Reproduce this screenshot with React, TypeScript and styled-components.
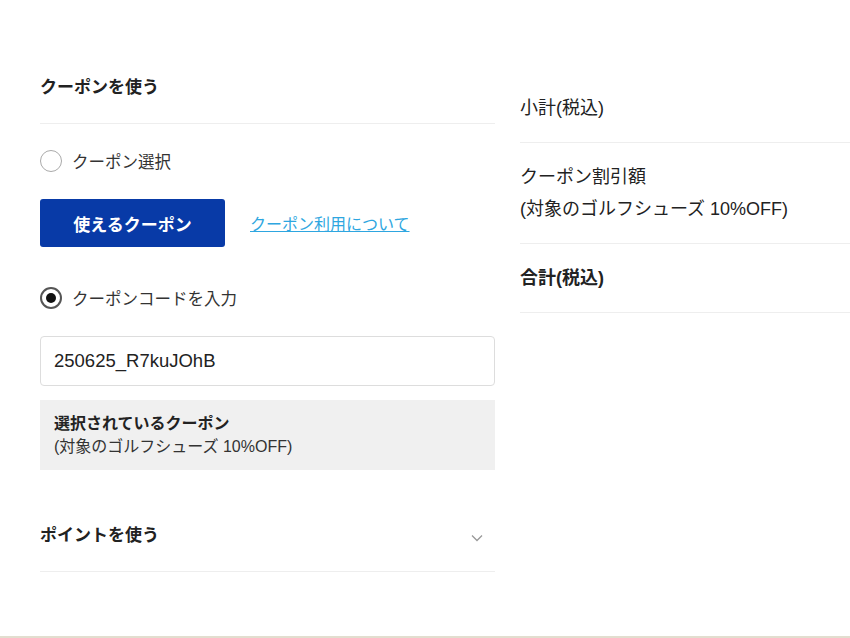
import React from 'react'
import styled, { createGlobalStyle } from 'styled-components'

const GlobalStyle = createGlobalStyle`
  html, body {
    margin: 0;
    padding: 0;
    background: #fff;
  }
  body {
    font-family: "Liberation Sans", "Noto Sans CJK JP", sans-serif;
    color: #222;
  }
`

type RadioProps = {
  label: string
  checked?: boolean
  top: number
}

const RadioOption = ({ label, checked, top }: RadioProps) => {
  return (
    <RadioRow $top={top}>
      <RadioCircle $checked={checked} />
      <RadioLabel>{label}</RadioLabel>
    </RadioRow>
  )
}

const App = () => {
  return (
    <Page>
      <GlobalStyle />
      <LeftColumn>
        <SectionHeader>クーポンを使う</SectionHeader>
        <RadioOption label="クーポン選択" top={26} />
        <ButtonRow>
          <PrimaryButton type="button">使えるクーポン</PrimaryButton>
          <InfoLink href="#">クーポン利用について</InfoLink>
        </ButtonRow>
        <RadioOption label="クーポンコードを入力" checked top={40} />
        <CodeInput defaultValue="250625_R7kuJOhB" />
        <SelectedBox>
          <SelectedTitle>選択されているクーポン</SelectedTitle>
          <SelectedDesc>(対象のゴルフシューズ 10%OFF)</SelectedDesc>
        </SelectedBox>
        <PointsHeader>
          <span>ポイントを使う</span>
          <svg width="12" height="8" viewBox="0 0 12 8">
            <path d="M1 1.5 L6 6.5 L11 1.5" fill="none" stroke="#999" strokeWidth="1.3" />
          </svg>
        </PointsHeader>
      </LeftColumn>
      <RightColumn>
        <SummaryRow>小計(税込)</SummaryRow>
        <SummaryRow>
          クーポン割引額
          <br />
          (対象のゴルフシューズ 10%OFF)
        </SummaryRow>
        <SummaryRow $bold>合計(税込)</SummaryRow>
      </RightColumn>
    </Page>
  )
}

const Page = styled.div`
  display: flex;
  height: 638px;
  box-sizing: border-box;
  border-bottom: 2px solid #e2decf;
  overflow: hidden;
`

const LeftColumn = styled.div`
  width: 455px;
  margin-left: 40px;
  padding-top: 64px;
  display: flex;
  flex-direction: column;
`

const SectionHeader = styled.div`
  font-size: 17px;
  font-weight: bold;
  line-height: 24px;
  padding: 12px 0 23px;
  border-bottom: 1px solid #eee;
`

const RadioRow = styled.label<{ $top: number }>`
  display: flex;
  align-items: center;
  height: 22px;
  margin-top: ${(p) => p.$top}px;
`

const RadioCircle = styled.span<{ $checked?: boolean }>`
  width: 22px;
  height: 22px;
  box-sizing: border-box;
  border-radius: 50%;
  border: ${(p) => (p.$checked ? '2px solid #555' : '1.5px solid #aaa')};
  display: flex;
  align-items: center;
  justify-content: center;
  &::after {
    content: '';
    width: 10px;
    height: 10px;
    border-radius: 50%;
    background: ${(p) => (p.$checked ? '#111' : 'transparent')};
  }
`

const RadioLabel = styled.span`
  margin-left: 10px;
  font-size: 16.5px;
  color: #333;
`

const ButtonRow = styled.div`
  display: flex;
  align-items: center;
  margin-top: 27px;
`

const PrimaryButton = styled.button`
  width: 185px;
  height: 48px;
  border: none;
  border-radius: 3px;
  background: #083aa7;
  color: #fff;
  font-family: inherit;
  font-size: 17px;
  font-weight: bold;
`

const InfoLink = styled.a`
  margin-left: 25px;
  font-size: 16px;
  color: #2ea6e0;
  text-decoration: underline;
`

const CodeInput = styled.input`
  margin-top: 27px;
  height: 50px;
  box-sizing: border-box;
  border: 1px solid #ddd;
  border-radius: 4px;
  padding: 0 13px;
  font-family: inherit;
  font-size: 18.5px;
  color: #222;
  outline: none;
`

const SelectedBox = styled.div`
  margin-top: 14px;
  height: 70px;
  box-sizing: border-box;
  padding: 12px 14px;
  background: #f0f0f0;
  font-size: 16px;
  line-height: 23px;
`

const SelectedTitle = styled.div`
  font-weight: bold;
`

const SelectedDesc = styled.div`
  color: #333;
`

const PointsHeader = styled.div`
  display: flex;
  align-items: center;
  justify-content: space-between;
  padding: 54px 12px 23px 0;
  border-bottom: 1px solid #eee;
  font-size: 17px;
  font-weight: bold;
  line-height: 24px;
  svg {
    margin-top: 4px;
  }
`

const RightColumn = styled.div`
  flex: 1;
  margin-left: 25px;
  padding-top: 74px;
`

const SummaryRow = styled.div<{ $bold?: boolean }>`
  padding: 18px 0;
  font-size: 18px;
  line-height: 32px;
  font-weight: ${(p) => (p.$bold ? 'bold' : 'normal')};
  color: #222;
  border-bottom: 1px solid #eee;
`

export default App
